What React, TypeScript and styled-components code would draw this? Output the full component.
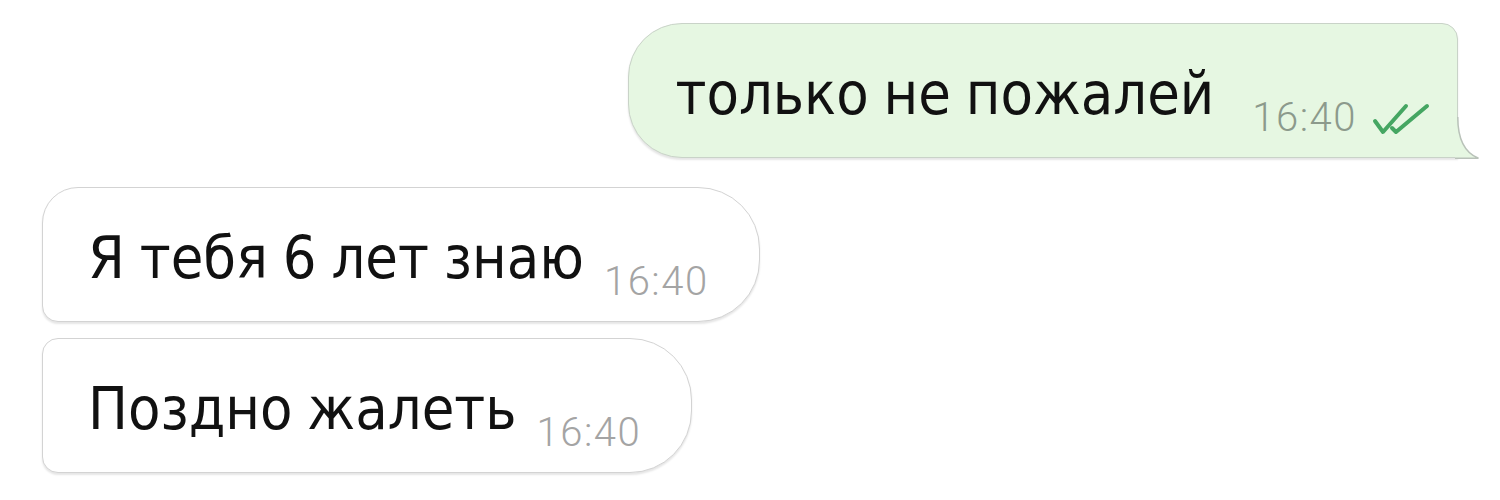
import React from 'react';
import styled, { createGlobalStyle } from 'styled-components';

const GlobalStyle = createGlobalStyle`
  html, body {
    margin: 0;
    padding: 0;
    background: #ffffff;
  }
  body {
    font-family: "DejaVu Sans Condensed", "Liberation Sans", sans-serif;
  }
`;

interface Message {
  id: number;
  text: string;
  time: string;
  outgoing?: boolean;
  shape?: 'first' | 'next';
}

const messages: Message[] = [
  { id: 1, text: 'только не пожалей', time: '16:40', outgoing: true },
  { id: 2, text: 'Я тебя 6 лет знаю', time: '16:40', shape: 'first' },
  { id: 3, text: 'Поздно жалеть', time: '16:40', shape: 'next' },
];

const Chat = styled.div`
  display: flex;
  flex-direction: column;
  padding: 23px 42px 0;
  width: 1500px;
  height: 500px;
  box-sizing: border-box;
`;

const Row = styled.div<{ $out?: boolean; $gap: number }>`
  display: flex;
  justify-content: ${({ $out }) => ($out ? 'flex-end' : 'flex-start')};
  margin-top: ${({ $gap }) => $gap}px;
`;

const Bubble = styled.div<{ $out?: boolean; $shape?: 'first' | 'next' }>`
  position: relative;
  display: flex;
  align-items: flex-end;
  box-sizing: border-box;
  height: 135px;
  padding: ${({ $out }) => ($out ? '0 26px 19px 47px' : '0 50px 19px 45px')};
  background: ${({ $out }) => ($out ? '#e6f7e2' : '#ffffff')};
  border: 1.5px solid ${({ $out }) => ($out ? '#c9d3c8' : '#d3d3d3')};
  border-radius: ${({ $out, $shape }) =>
    $out ? '54px 16px 0 54px' : $shape === 'first' ? '36px 62px 62px 16px' : '16px 62px 62px 16px'};
  box-shadow: 0 2px 2px rgba(0, 0, 0, 0.1);
`;

const Text = styled.span`
  font-size: 59px;
  line-height: 1;
  word-spacing: -2px;
  color: #111111;
  margin-bottom: 15px;
  white-space: nowrap;
`;

const Meta = styled.span<{ $out?: boolean }>`
  display: flex;
  align-items: flex-end;
  margin-left: ${({ $out }) => ($out ? '38px' : '20px')};
`;

const Time = styled.span<{ $out?: boolean }>`
  font-family: Roboto, "Liberation Sans", sans-serif;
  font-weight: 300;
  font-size: 40px;
  line-height: 1;
  letter-spacing: 1.5px;
  color: ${({ $out }) => ($out ? '#8c9a8c' : '#a4a4a4')};
`;

const Checks = styled.svg`
  width: 60px;
  height: 32px;
  margin-left: 14px;
  margin-bottom: 3px;
`;

const Tail = styled.svg`
  position: absolute;
  right: -22px;
  bottom: -1.5px;
  width: 24px;
  height: 42px;
  overflow: visible;
`;

const DoubleCheck = () => (
  <Checks viewBox="0 0 60 32">
    <g fill="none" stroke="#45a662" strokeWidth={4} strokeLinecap="round" strokeLinejoin="round">
      <path d="M4 18 L12 29 L35 3" />
      <path d="M21 25 L25 29 L56 3" />
    </g>
  </Checks>
);

const OutTail = () => (
  <Tail viewBox="0 0 24 42">
    <path d="M0 0 L2.75 0 C2.75 22 10 36 23.5 41.25 L0 41.25 Z" fill="#e6f7e2" />
    <path
      d="M2.75 0 C2.75 22 10 36 23.5 41.25 L0 41.25"
      fill="none"
      stroke="#b9c2b9"
      strokeWidth={1.5}
    />
  </Tail>
);

export default function App() {
  return (
    <>
      <GlobalStyle />
      <Chat>
        {messages.map((m, i) => (
          <Row key={m.id} $out={m.outgoing} $gap={i === 0 ? 0 : i === 1 ? 29 : 16}>
            <Bubble $out={m.outgoing} $shape={m.shape}>
              <Text>{m.text}</Text>
              <Meta $out={m.outgoing}>
                <Time $out={m.outgoing}>{m.time}</Time>
                {m.outgoing && <DoubleCheck />}
              </Meta>
              {m.outgoing && <OutTail />}
            </Bubble>
          </Row>
        ))}
      </Chat>
    </>
  );
}
